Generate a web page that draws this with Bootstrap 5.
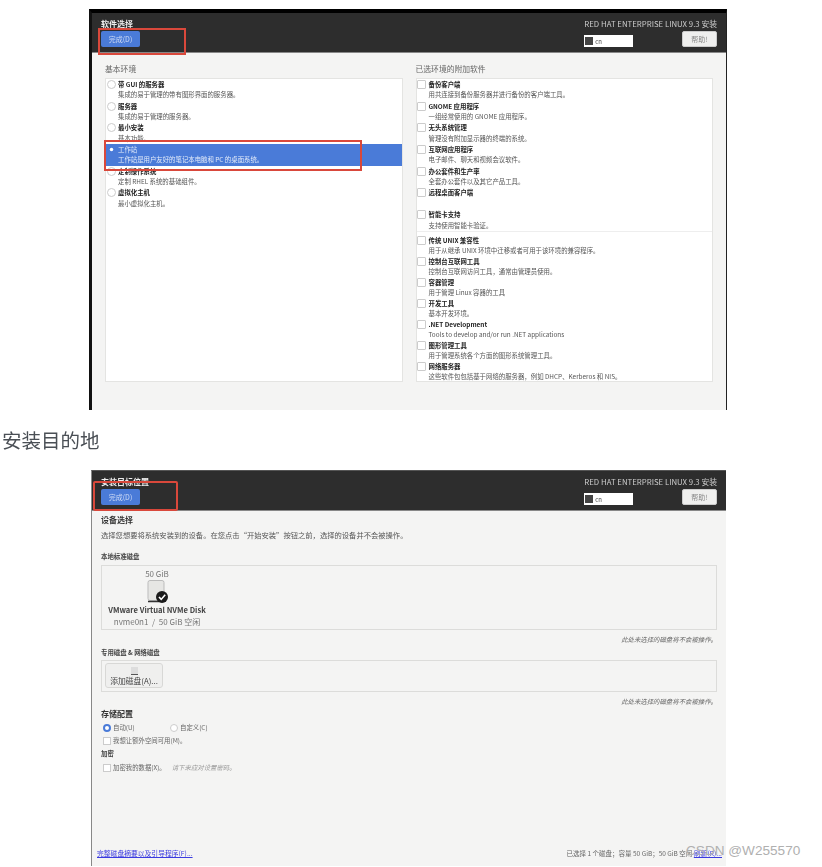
<!DOCTYPE html>
<html lang="zh-CN">
<head>
  <meta charset="UTF-8">
  <meta name="viewport" content="width=device-width, initial-scale=1.0">
  <title>RHEL 9.3 安装</title>
  <link href="https://cdn.jsdelivr.net/npm/bootstrap@5.3.0/dist/css/bootstrap.min.css" rel="stylesheet">
  <style>
    body { margin: 0; background: #fff; font-family: "Liberation Sans", "Noto Sans CJK SC", sans-serif; color: #333; width: 822px; height: 867px; overflow: hidden; }
    .cjk { font-family: "Noto Sans CJK SC", sans-serif; }
    .win { background: #f4f4f3; }
    .win-a { margin: 9px 0 0 89px; width: 638px; height: 401px; border-top: 4px solid #000; border-left: 3px solid #111; border-right: 1px solid #222; }
    .win-b { margin: 0 0 0 91px; width: 635px; height: 396px; border-top: 1px solid #555; border-left: 1px solid #888; }
    .win-a > *, .win-b > * { filter: blur(.6px); }
    .win-head { background: #2d2d2d; height: 40px; border-bottom: 1px solid #888; color: #eee; padding: 5px 9px 0 9px; }
    .win-title { font-size: 8px; font-weight: 700; line-height: 11px; height: 13px; }
    .btn-done { background: #4a7bd8; border: 0; color: #cfdcf5; font-size: 7px; width: 39px; height: 16px; padding: 0; border-radius: 2px; display: block; }
    .brand { font-size: 7.8px; line-height: 11px; color: #ccc; text-align: right; height: 13px; white-space: nowrap; }
    .kb-box { background: #fff; width: 49px; height: 12px; color: #444; font-size: 6px; display: flex; align-items: center; padding-left: 1px; gap: 2px; margin-top: 4px; }
    .kb-ico { width: 8px; height: 8px; background: #444; display: block; }
    .btn-help { background: #efefee; border: 1px solid #ccc; color: #888; font-size: 7px; width: 35px; height: 16px; padding: 0; border-radius: 2px; }
    .soft-body { padding: 8px 13px 0 13px; gap: 13px; }
    .col-left { width: 298px; }
    .col-right { width: 298px; }
    .sec-label { font-size: 7.8px; line-height: 16px; height: 17px; color: #666; }
    .pick-list { height: 304px; overflow: hidden; background: #fff; border: 1px solid #e4e4e2; border-radius: 0; display: block; }
    .pick-row { height: 21.7px; border: 0; border-radius: 0; padding: 0 0 0 12px; position: relative; background: transparent; color: #333; font-size: 6.4px; line-height: 10.4px; white-space: nowrap; }
    .pick-row b { display: block; color: #222; font-weight: 700; padding-top: 1px; }
    .pick-row span { display: block; color: #555; }
    .pick-row.on { background: #4a7bd8; color: #dfe8f8; }
    .pick-row.on b, .pick-row.on span { color: #e4ecfa; font-weight: 400; }
    .pick-row .form-check-input { position: absolute; left: 1px; top: 1px; margin: 0; width: 9px; height: 9px; border-color: #ccc; }
    .pick-row .form-check-input:checked { background-color: #4a7bd8; border-color: #4a7bd8; }
    .tick-rows .pick-row { padding-left: 12px; }
    .tick-rows .form-check-input { left: 0; border-radius: 1px; }
    .list-rule { border-top: 1px solid #eee; margin: 0 0 3px; }
    .tight { height: 21px; }
    .dest-body { padding: 1px 9px 0 9px; }
    .dest-h { font-size: 8px; font-weight: 700; line-height: 16px; color: #333; }
    .dest-p { font-size: 7.3px; line-height: 14px; color: #555; white-space: nowrap; }
    .dest-sub { font-size: 6.4px; font-weight: 700; line-height: 10px; color: #444; }
    .sub-local { margin-top: 10px; }
    .sub-net { margin-top: 2px; }
    .disk-panel { border: 1px solid #dcdcda; height: 65px; padding: 3px 0 0 6px; margin-top: 3px; }
    .disk-card { width: 98px; text-align: center; }
    .disk-size { font-size: 8px; line-height: 10px; color: #777; }
    .disk-name { font-size: 7.6px; font-weight: 700; line-height: 10px; color: #444; white-space: nowrap; margin-top: 2px; }
    .disk-free { font-size: 8px; line-height: 13px; color: #777; white-space: nowrap; }
    .disk-ico { display: block; margin: 1px auto 0; }
    .note { font-size: 6.4px; font-style: italic; line-height: 12px; color: #666; text-align: right; margin-top: 4px; }
    .add-panel { border: 1px solid #dcdcda; height: 32px; padding: 2px 0 0 3px; margin-top: 2px; }
    .btn-add { display: block; background: #efefee; border: 1px solid #d8d8d6; color: #444; font-size: 7.8px; line-height: 10px; width: 58px; height: 25px; padding: 2px 0 0; border-radius: 3px; }
    .btn-add i { display: block; width: 7px; height: 8px; background: #ddd; border-bottom: 1px solid #555; margin: 0 auto 1px; }
    .opt-line { font-size: 6.4px; line-height: 13px; color: #666; align-items: center; gap: 2px; padding-left: 2px; }
    .opt-line label { gap: 2px; }
    .opt-line .form-check-input { margin: 0; width: 8px; height: 8px; border-color: #ccc; }
    .opt-line .form-check-input:checked { background-color: #fff; border: 2.5px solid #4a7bd8; background-image: none; }
    .opt-line em { color: #999; margin-left: 4px; }
    .storage-h { margin-top: -2px; line-height: 15px; }
    .auto-opt { width: 65px; }
    .crypt-h { margin: 1px 0 1px; line-height: 12px; }
    .dest-foot { margin-top: auto; padding: 0 4px 8px 5px; font-size: 6.8px; line-height: 10px; color: #666; }
    .foot-state { font-size: 6.5px; }
    .foot-state a { font-size: 6.8px; }
    .blue-link { color: #3a3ae0; }
    .mark-box { position: absolute; border: 2px solid #d9483b; }
    .mark-a { left: 98px; top: 28px; width: 88px; height: 27px; }
    .mark-b { left: 104px; top: 140px; width: 258px; height: 31px; }
    .mark-c { left: 93px; top: 481px; width: 85px; height: 30px; border-radius: 2px; }
    .step-title { font-size: 19.5px; font-weight: 400; line-height: 24px; color: #4a4f55; margin: 18px 0 18px 2px; height: 24px; filter: blur(.3px); }
    .stamp { position: absolute; left: 686px; top: 842px; font-size: 13.6px; line-height: 18px; color: #b0b0b0; white-space: nowrap; }
  </style>
</head>
<body class="position-relative">

  <div class="win win-a d-flex flex-column">
    <div class="win-head d-flex justify-content-between cjk">
      <div>
        <div class="win-title">软件选择</div>
        <button class="btn btn-done cjk">完成(D)</button>
      </div>
      <div>
        <div class="brand">RED HAT ENTERPRISE LINUX 9.3 安装</div>
        <div class="d-flex justify-content-between align-items-start">
          <div class="kb-box"><i class="kb-ico"></i>cn</div>
          <button class="btn btn-help cjk">帮助!</button>
        </div>
      </div>
    </div>
    <div class="soft-body d-flex cjk">
      <div class="col-left">
        <div class="sec-label">基本环境</div>
        <div class="list-group pick-list">
          <label class="list-group-item pick-row"><input class="form-check-input" type="radio" name="env"><b>带 GUI 的服务器</b><span>集成的易于管理的带有图形界面的服务器。</span></label>
          <label class="list-group-item pick-row"><input class="form-check-input" type="radio" name="env"><b>服务器</b><span>集成的易于管理的服务器。</span></label>
          <label class="list-group-item pick-row"><input class="form-check-input" type="radio" name="env"><b>最小安装</b><span>基本功能。</span></label>
          <label class="list-group-item pick-row on"><input class="form-check-input" type="radio" name="env" checked><b>工作站</b><span>工作站是用户友好的笔记本电脑和 PC 的桌面系统。</span></label>
          <label class="list-group-item pick-row"><input class="form-check-input" type="radio" name="env"><b>定制操作系统</b><span>定制 RHEL 系统的基础组件。</span></label>
          <label class="list-group-item pick-row"><input class="form-check-input" type="radio" name="env"><b>虚拟化主机</b><span>最小虚拟化主机。</span></label>
        </div>
      </div>
      <div class="col-right">
        <div class="sec-label">已选环境的附加软件</div>
        <div class="list-group pick-list tick-rows">
          <label class="list-group-item pick-row"><input class="form-check-input" type="checkbox"><b>备份客户端</b><span>用共连接到备份服务器并进行备份的客户端工具。</span></label>
          <label class="list-group-item pick-row"><input class="form-check-input" type="checkbox"><b>GNOME 应用程序</b><span>一组经常使用的 GNOME 应用程序。</span></label>
          <label class="list-group-item pick-row"><input class="form-check-input" type="checkbox"><b>无头系统管理</b><span>管理没有附加显示器的终端的系统。</span></label>
          <label class="list-group-item pick-row"><input class="form-check-input" type="checkbox"><b>互联网应用程序</b><span>电子邮件、聊天和视频会议软件。</span></label>
          <label class="list-group-item pick-row"><input class="form-check-input" type="checkbox"><b>办公套件和生产率</b><span>全套办公套件以及其它产品工具。</span></label>
          <label class="list-group-item pick-row"><input class="form-check-input" type="checkbox"><b>远程桌面客户端</b><span>&nbsp;</span></label>
          <label class="list-group-item pick-row"><input class="form-check-input" type="checkbox"><b>智能卡支持</b><span>支持使用智能卡验证。</span></label>
          <div class="list-rule"></div>
          <label class="list-group-item pick-row tight"><input class="form-check-input" type="checkbox"><b>传统 UNIX 兼容性</b><span>用于从继承 UNIX 环境中迁移或者可用于该环境的兼容程序。</span></label>
          <label class="list-group-item pick-row tight"><input class="form-check-input" type="checkbox"><b>控制台互联网工具</b><span>控制台互联网访问工具，通常由管理员使用。</span></label>
          <label class="list-group-item pick-row tight"><input class="form-check-input" type="checkbox"><b>容器管理</b><span>用于管理 Linux 容器的工具</span></label>
          <label class="list-group-item pick-row tight"><input class="form-check-input" type="checkbox"><b>开发工具</b><span>基本开发环境。</span></label>
          <label class="list-group-item pick-row tight"><input class="form-check-input" type="checkbox"><b>.NET Development</b><span>Tools to develop and/or run .NET applications</span></label>
          <label class="list-group-item pick-row tight"><input class="form-check-input" type="checkbox"><b>图形管理工具</b><span>用于管理系统各个方面的图形系统管理工具。</span></label>
          <label class="list-group-item pick-row tight"><input class="form-check-input" type="checkbox"><b>网络服务器</b><span>这些软件包包括基于网络的服务器，例如 DHCP、Kerberos 和 NIS。</span></label>
        </div>
      </div>
    </div>
  </div>

  <h2 class="step-title cjk">安装目的地</h2>

  <div class="win win-b d-flex flex-column cjk">
    <div class="win-head d-flex justify-content-between">
      <div>
        <div class="win-title">安装目标位置</div>
        <button class="btn btn-done cjk">完成(D)</button>
      </div>
      <div>
        <div class="brand">RED HAT ENTERPRISE LINUX 9.3 安装</div>
        <div class="d-flex justify-content-between align-items-start">
          <div class="kb-box"><i class="kb-ico"></i>cn</div>
          <button class="btn btn-help cjk">帮助!</button>
        </div>
      </div>
    </div>
    <div class="dest-body">
      <div class="dest-h">设备选择</div>
      <div class="dest-p">选择您想要将系统安装到的设备。在您点击“开始安装”按钮之前，选择的设备并不会被操作。</div>
      <div class="dest-sub sub-local">本地标准磁盘</div>
      <div class="disk-panel">
        <div class="disk-card">
          <div class="disk-size">50 GiB</div>
          <svg class="disk-ico" width="22" height="23" viewBox="0 0 22 23">
            <rect x="2" y="0.5" width="16" height="20" rx="2" fill="#e6e6e4" stroke="#bbb"/>
            <path d="M2 21.5h11" stroke="#333" stroke-width="1.5"/>
            <circle cx="16" cy="17" r="6" fill="#1b1b1b"/>
            <path d="M13 17l2.2 2.4 4-4.6" fill="none" stroke="#fff" stroke-width="1.6"/>
          </svg>
          <div class="disk-name">VMware Virtual NVMe Disk</div>
          <div class="disk-free">nvme0n1 &nbsp;/&nbsp; 50 GiB 空闲</div>
        </div>
      </div>
      <div class="note">此处未选择的磁盘将不会被操作。</div>
      <div class="dest-sub sub-net">专用磁盘 &amp; 网络磁盘</div>
      <div class="add-panel">
        <button class="btn btn-add cjk"><i></i>添加磁盘(A)...</button>
      </div>
      <div class="note">此处未选择的磁盘将不会被操作。</div>
      <div class="dest-h storage-h">存储配置</div>
      <div class="d-flex opt-line">
        <label class="d-flex align-items-center auto-opt"><input class="form-check-input" type="radio" name="cfg" checked>自动(U)</label>
        <label class="d-flex align-items-center"><input class="form-check-input" type="radio" name="cfg">自定义(C)</label>
      </div>
      <label class="d-flex opt-line"><input class="form-check-input rounded-0" type="checkbox">我想让额外空间可用(M)。</label>
      <div class="dest-sub crypt-h">加密</div>
      <label class="d-flex opt-line"><input class="form-check-input rounded-0" type="checkbox">加密我的数据(X)。<em>请下来应对设置密码。</em></label>
    </div>
    <div class="dest-foot d-flex justify-content-between">
      <a class="blue-link" href="#">完整磁盘摘要以及引导程序(F)...</a>
      <span class="foot-state">已选择 1 个磁盘；容量 50 GiB；50 GiB 空闲 <a class="blue-link" href="#">刷新(R)...</a></span>
    </div>
  </div>

  <div class="mark-box mark-a"></div>
  <div class="mark-box mark-b"></div>
  <div class="mark-box mark-c"></div>
  <div class="stamp">CSDN @W255570</div>

  <script src="https://cdn.jsdelivr.net/npm/bootstrap@5.3.0/dist/js/bootstrap.bundle.min.js"></script>
</body>
</html>
